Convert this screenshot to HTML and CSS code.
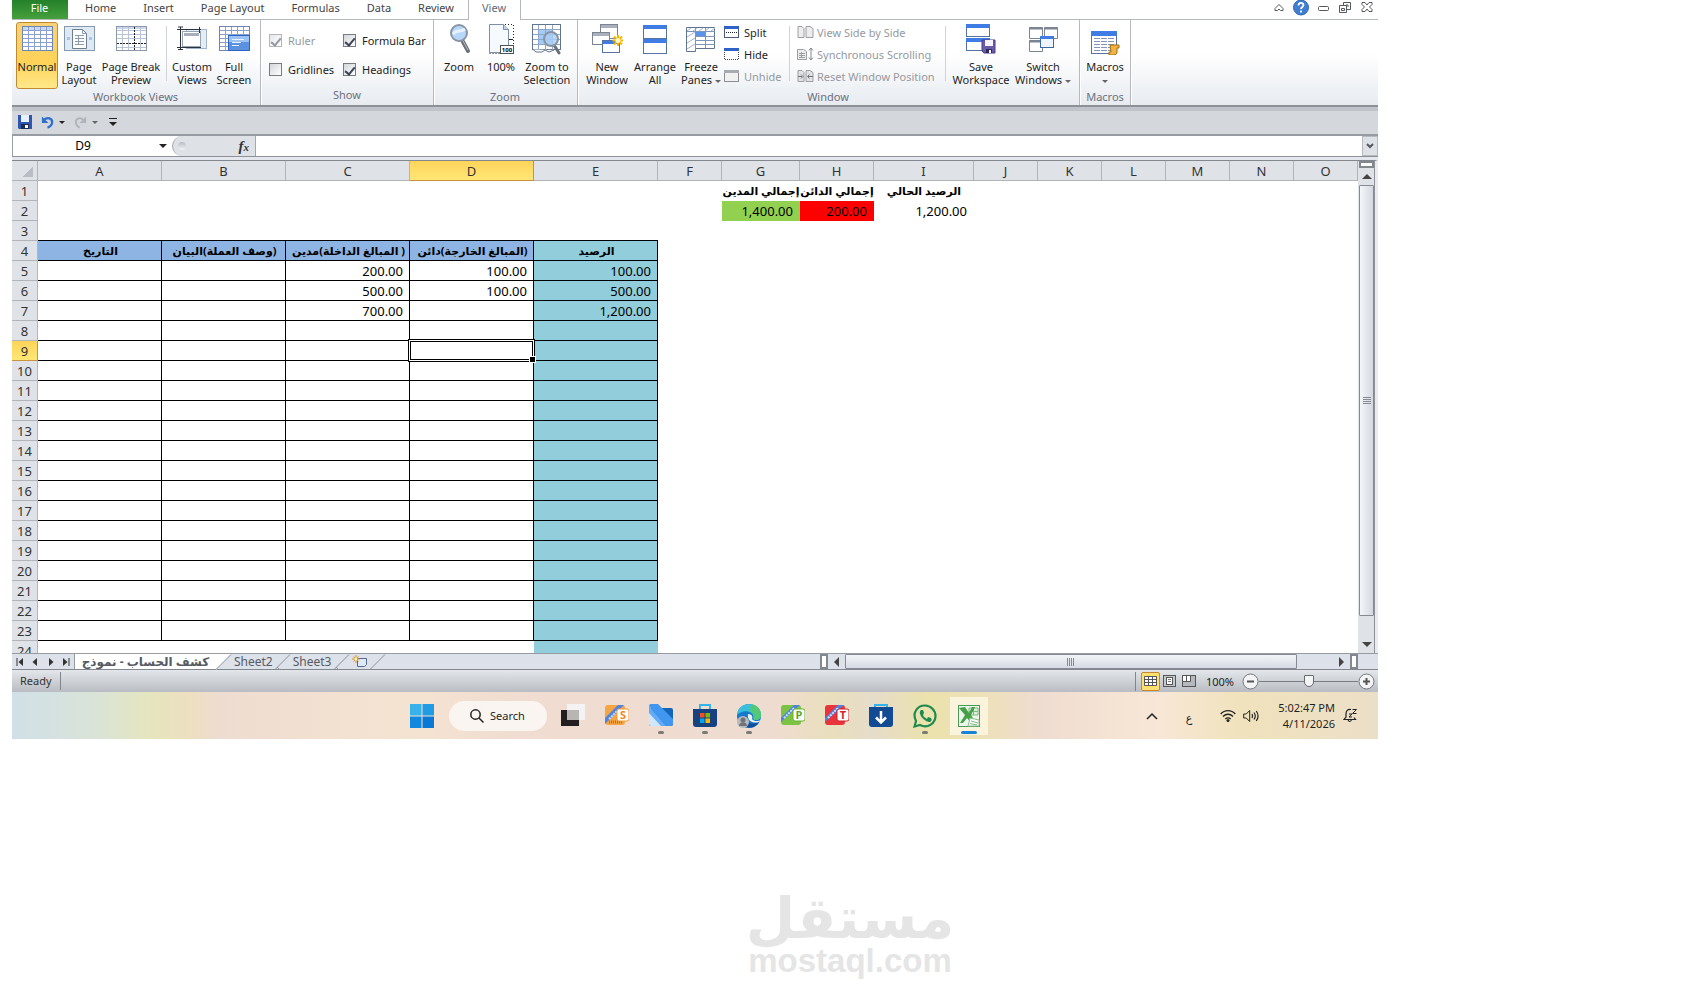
FILE: index.html
```html
<!DOCTYPE html>
<html lang="en">
<head>
    <meta charset="UTF-8">
    <meta name="viewport" content="width=device-width, initial-scale=1.0">
    <title>Account Statement</title>
    <link rel="stylesheet" href="styles.css">
</head>
<body>
    <main class="desktop">
        <header class="tabs">
            <button class="tab file">File</button>
            <button class="tab">Home</button>
            <button class="tab">Insert</button>
            <button class="tab">Page Layout</button>
            <button class="tab">Formulas</button>
            <button class="tab">Data</button>
            <button class="tab">Review</button>
            <button class="tab active">View</button>
            <div class="window-buttons">
                <button aria-label="Minimize ribbon"><svg width="16" height="16" viewBox="0 0 16 16"><path d="M4 8.500 8 4.500l4 4v2H9.500L8 9l-1.500 1.500H4z" fill="#fff" stroke="#55585e"/></svg></button>
                <button aria-label="Help"><svg width="16" height="16" viewBox="0 0 16 16"><circle cx="8" cy="7.500" r="7.500" fill="#3f7fd0" stroke="#2f66b5"/><path d="M5.500 5.500c0-3.400 5-3.200 5-.4C10.500 7 8 7 8 9M8 10.500v2" fill="none" stroke="#fff" stroke-width="1.800"/></svg></button>
                <button aria-label="Minimize"><svg width="16" height="16" viewBox="0 0 16 16"><rect x="3.500" y="6.500" width="10" height="4" rx="1" fill="#fff" stroke="#55585e"/></svg></button>
                <button aria-label="Restore"><svg width="16" height="16" viewBox="0 0 16 16"><path d="M6.500 2.500h7v7h-7z" fill="#fff" stroke="#55585e"/><path d="M9 5h2v2" fill="none" stroke="#55585e"/><path d="M2.500 5.500h7v7h-7z" fill="#fff" stroke="#55585e"/><path d="M4.500 8.500h3v2h-3z" fill="none" stroke="#55585e"/></svg></button>
                <button aria-label="Close"><svg width="16" height="16" viewBox="0 0 16 16"><path d="M3 2.500h3l2 2.500 2-2.500h3v2L10.500 7l2.500 2.500v2h-3L8 9l-2 2.500H3v-2L5.500 7 3 4.500z" fill="#fff" stroke="#55585e"/></svg></button>
            </div>
        </header>

        <section class="ribbon">
            <div class="group">
                <div class="group-body">
                    <button class="big sm pressed">
                        <svg width="32" height="32" viewBox="0 0 32 32"><rect x="1.500" y="3.500" width="30" height="24" fill="#fff" stroke="#6d87b0"/><rect x="2" y="4" width="29" height="3" fill="#c9d8ef"/><path d="M2 7.500h29M2 11.500h29M2 15.500h29M2 19.500h29M2 23.500h29M7.500 4v23M13.500 4v23M19.500 4v23M25.500 4v23" stroke="#8aa2cb"/></svg>
                        <span>Normal</span>
                    </button>
                    <button class="big sm">
                        <svg width="32" height="32" viewBox="0 0 32 32"><rect x="1.500" y="3.500" width="30" height="24" fill="#dfe9f3" stroke="#8399ad"/><path d="M9.500 6.500h10l4 4v15h-14z" fill="#fff" stroke="#6c7f92"/><path d="M19.500 6.500v4h4M12 12.500h9M12 15.500h9M12 18.500h9M12 21.500h9M15.500 12v10" fill="none" stroke="#8a9bb0"/><path d="M4 15.500h3M26 15.500h3" stroke="#a9c6e8" stroke-width="3"/></svg>
                        <span>Page<br>Layout</span>
                    </button>
                    <button class="big lg">
                        <svg width="32" height="32" viewBox="0 0 32 32"><rect x="1.500" y="3.500" width="30" height="24" fill="#fff" stroke="#8d99aa"/><rect x="2" y="4" width="29" height="2" fill="#c9d8ef"/><path d="M2 7.500h29M2 11.500h29M2 15.500h29M2 24.500h29M7.500 4v23M13.500 4v23M25.500 4v23" stroke="#b9c3d3"/><path d="M19.500 4v23M2 20.500h29" stroke="#222" stroke-dasharray="2 1"/></svg>
                        <span>Page Break<br>Preview</span>
                    </button>
                    <div class="sep"></div>
                    <button class="big sm">
                        <svg width="32" height="32" viewBox="0 0 32 32"><rect x="10.500" y="6.500" width="20" height="19" fill="#e3edf6" stroke="#9fb4c8"/><rect x="6.500" y="8.500" width="18" height="15" fill="#fff" stroke="#98a3b0"/><rect x="8" y="10" width="15" height="3" fill="#a8afb8"/><path d="M4.500 4v23M1 6.500h24M1 24.500h24M23.500 4v6M2 4h5M2 26.500h5" stroke="#2c3442" fill="none"/></svg>
                        <span>Custom<br>Views</span>
                    </button>
                    <button class="big sm">
                        <svg width="32" height="32" viewBox="0 0 32 32"><rect x="1.500" y="3.500" width="30" height="24" fill="#fff" stroke="#6d87b0"/><path d="M2 7.500h29M2 11.500h29M2 15.500h29M2 19.500h29M2 23.500h29M7.500 4v23M13.500 4v23M19.500 4v23M25.500 4v23" stroke="#8aa2cb"/><rect x="10.500" y="12.500" width="21" height="15" fill="#5a92e0" stroke="#2d64c0"/><rect x="11" y="13" width="20" height="6" fill="#9cc3f5"/><path d="M14 16.500h12M14 19.500h9M14 22.500h7" stroke="#e9f2ff"/></svg>
                        <span>Full<br>Screen</span>
                    </button>
                </div>
                <div class="group-name">Workbook Views</div>
            </div>

            <div class="group show">
                <div class="checks">
                    <label class="disabled"><input type="checkbox" checked disabled>Ruler</label>
                    <label><input type="checkbox" checked>Formula Bar</label>
                    <label><input type="checkbox">Gridlines</label>
                    <label><input type="checkbox" checked>Headings</label>
                </div>
                <div class="group-name">Show</div>
            </div>

            <div class="group">
                <div class="group-body">
                    <button class="big sm">
                        <svg width="32" height="32" viewBox="0 0 32 32"><path d="M19 17 25 28" stroke="#6b6f78" stroke-width="4" stroke-linecap="round"/><path d="M20 18 25 27" stroke="#b9bdc6"/><circle cx="16" cy="10" r="8" fill="#b7d7f8" stroke="#8a94a3" stroke-width="2"/><path d="M10 11c4-5 7-1 12-5" stroke="#e6f3ff" stroke-width="3" fill="none"/></svg>
                        <span>Zoom</span>
                    </button>
                    <button class="big sm">
                        <svg width="32" height="32" viewBox="0 0 32 32"><path d="M4.500 1.500h14l5 5v23h-19z" fill="#f6f9fd" stroke="#7b8fa9"/><path d="M18.500 1.500v5h5" fill="#c5d6ea" stroke="#7b8fa9"/><path d="M20 1.500h8.500v20M4.500 30.500h12" stroke="#222" stroke-dasharray="1 2" fill="none"/><path d="M24 16.500h4" stroke="#222"/><rect x="15.500" y="22.500" width="13" height="8" fill="#fff" stroke="#4c525c"/><text x="22" y="29" class="tiny">100</text></svg>
                        <span>100%</span>
                    </button>
                    <button class="big md">
                        <svg width="32" height="32" viewBox="0 0 32 32"><rect x="1.500" y="1.500" width="28" height="25" fill="#fff" stroke="#61748f"/><rect x="8" y="7" width="14" height="14" fill="#a4ccf7"/><path d="M2 6.500h27M2 11.500h27M2 16.500h27M2 21.500h27M7.500 2v25M14.500 2v25M21.500 2v25" stroke="#8ea6c6"/><path d="M2 26.500 5 29h6l3-2 4 2 5-2" fill="#fff" stroke="#61748f"/><path d="M23 22l5 8" stroke="#6b6f78" stroke-width="3" stroke-linecap="round"/><circle cx="20" cy="16" r="7" fill="#a9cef6" fill-opacity=".8" stroke="#8a94a3" stroke-width="2"/></svg>
                        <span>Zoom to<br>Selection</span>
                    </button>
                </div>
                <div class="group-name">Zoom</div>
            </div>

            <div class="group">
                <div class="group-body">
                    <button class="big md">
                        <svg width="32" height="32" viewBox="0 0 32 32"><rect x="9.500" y="1.500" width="17" height="14" fill="#fff" stroke="#7b8493"/><rect x="10" y="2" width="16" height="3" fill="#aab1bd"/><rect x="1.500" y="9.500" width="17" height="12" fill="#fff" stroke="#7b8493"/><rect x="2" y="10" width="16" height="3" fill="#aab1bd"/><rect x="11.500" y="17.500" width="17" height="12" fill="#fff" stroke="#5672a0"/><rect x="12" y="18" width="16" height="3" fill="#3f7ce4"/><path d="M27 12v11M21.500 17.500h11M23 13.500l8 8M31 13.500l-8 8" stroke="#f4b400" stroke-width="2"/><circle cx="27" cy="17.500" r="2.500" fill="#fff8c0"/></svg>
                        <span>New<br>Window</span>
                    </button>
                    <button class="big mid">
                        <svg width="32" height="32" viewBox="0 0 32 32"><rect x="4.500" y="2.500" width="23" height="28" fill="#fff" stroke="#5672a0"/><rect x="4" y="2" width="24" height="4" fill="#3f7ce4"/><rect x="4" y="16" width="24" height="4" fill="#3f7ce4"/><path d="M4 15.500h24" stroke="#5672a0"/></svg>
                        <span>Arrange<br>All</span>
                    </button>
                    <button class="big mid">
                        <svg width="32" height="32" viewBox="0 0 32 32"><path d="M1.500 4.500h28v21h-19v3h-9z" fill="#fff" stroke="#61748f"/><rect x="10" y="9" width="11" height="4" fill="#5b93ea"/><path d="M2 8.500h28M10 13.500h20M10 17.500h20M10 21.500h20M10.500 5v22M20.500 5v20" stroke="#7e95b8"/><path d="M2 8l4-3M8 8l4-3M14 8l4-3M20 8l4-3M26 8l4-3M2 14l8-5M2 20l8-5M2 26l8-5" stroke="#9cb4d6"/></svg>
                        <span>Freeze<br>Panes <i class="caret"></i></span>
                    </button>
                    <div class="small-list">
                        <button class="small"><svg width="16" height="14" viewBox="0 0 16 14"><rect x=".5" y="1.500" width="14" height="11" fill="#fff" stroke="#4b5a78"/><rect x="0" y="1" width="15" height="3" fill="#2e62c9"/><path d="M2 7.500h12" stroke="#222" stroke-dasharray="1 1"/></svg>Split</button>
                        <button class="small"><svg width="16" height="14" viewBox="0 0 16 14"><path d="M.5 3v9.500h14V3" fill="#fff" stroke="#444" stroke-dasharray="1 1"/><rect x="0" y="1" width="15" height="3" fill="#2e62c9"/></svg>Hide</button>
                        <button class="small disabled"><svg width="16" height="14" viewBox="0 0 16 14"><rect x=".5" y="1.500" width="14" height="11" fill="#f1f1f2" stroke="#8b8e94"/><rect x="0" y="1" width="15" height="3" fill="#a8abb0"/></svg>Unhide</button>
                    </div>
                    <div class="sep"></div>
                    <div class="small-list wide">
                        <button class="small disabled"><svg width="17" height="14" viewBox="0 0 17 14"><path d="M1 1.500h4l2 2v9H1zM9 1.500h4l3 2v9H9z" fill="#ededee" stroke="#9b9ea3"/></svg>View Side by Side</button>
                        <button class="small disabled"><svg width="17" height="14" viewBox="0 0 17 14"><path d="M.5 2.500h6l3 2v8h-9z" fill="#ededee" stroke="#9b9ea3"/><path d="M2 6.500h6M2 8.500h6M2 10.500h6M4.500 5v6" stroke="#9b9ea3"/><path d="M14 1v12M12 3.500 14 1l2 2.500M12 10.500l2 2.500 2-2.500" fill="none" stroke="#85888e"/></svg>Synchronous Scrolling</button>
                        <button class="small disabled"><svg width="17" height="14" viewBox="0 0 17 14"><path d="M1 1.500h4l2 2v9H1zM9 1.500h4l3 2v9H9z" fill="#e2e2e3" stroke="#9b9ea3"/><path d="M1 7.500h4M4 5.500l2 2-2 2M16 7.500h-5M12.500 5.500l-2 2 2 2" fill="none" stroke="#6f7278"/></svg>Reset Window Position</button>
                    </div>
                    <div class="sep"></div>
                    <button class="big lg">
                        <svg width="32" height="32" viewBox="0 0 32 32"><rect x="1.500" y="1.500" width="23" height="12" fill="#fff" stroke="#5672a0"/><rect x="1" y="1" width="24" height="4" fill="#3f7ce4"/><rect x="1.500" y="15.500" width="23" height="12" fill="#fff" stroke="#5672a0"/><rect x="1" y="15" width="24" height="4" fill="#3f7ce4"/><path d="M17 17h13v13H19l-2-2z" fill="#6a5aa8" stroke="#4a3c86"/><rect x="20" y="17" width="8" height="6" fill="#f4f4fa"/><rect x="21" y="26" width="6" height="4" fill="#2e2858"/><rect x="24" y="27" width="2" height="3" fill="#fff"/></svg>
                        <span>Save<br>Workspace</span>
                    </button>
                    <button class="big lg">
                        <svg width="32" height="32" viewBox="0 0 32 32"><g fill="#fff" stroke="#7b8493"><path d="M2.500 4.500h13v11h-13zM17.500 4.500h13v11h-13zM2.500 17.500h13v11h-13z"/></g><path d="M2 5.500h14M17 5.500h14M2 18.500h14" stroke="#7b8493" stroke-width="2"/><rect x="13.500" y="13.500" width="13" height="11" fill="#eef5ff" stroke="#3c69ae"/><rect x="13" y="13" width="14" height="3" fill="#3f7ce4"/></svg>
                        <span>Switch<br>Windows <i class="caret"></i></span>
                    </button>
                </div>
                <div class="group-name">Window</div>
            </div>

            <div class="group flush">
                <div class="group-body">
                    <button class="big md">
                        <svg width="32" height="32" viewBox="0 0 32 32"><rect x="2.500" y="8.500" width="25" height="22" fill="#fff" stroke="#5672a0"/><rect x="2" y="8" width="26" height="5" fill="#3f7ce4"/><path d="M5 15.500h20M5 18.500h20M5 21.500h20M5 24.500h20M5 27.500h20" stroke="#8496b8" stroke-dasharray="6 1"/><path d="M21 22h9v3h-2v5l-2 2h-6v-3h2z" fill="#f0b441" stroke="#a96c14"/></svg>
                        <span>Macros<br><i class="caret"></i></span>
                    </button>
                </div>
                <div class="group-name">Macros</div>
            </div>
        </section>

        <nav class="quick">
            <button aria-label="Save" class="save"><svg width="14" height="14" viewBox="0 0 14 14"><path d="M0 0h14v14H1l-1-1z" fill="#2e56b0"/><rect x="3" y="0" width="8" height="7" fill="#e8f0fb"/><rect x="3" y="9" width="8" height="5" fill="#1c2c55"/><rect x="7" y="10" width="3" height="3" fill="#fff"/></svg></button>
            <button aria-label="Undo"><svg width="13" height="14" viewBox="0 0 14 14"><path d="M3 5c4-4 9-2 9 2 0 3-2 5-5 6" fill="none" stroke="#2f6fd0" stroke-width="2.500"/><path d="M1 1v7h7z" fill="#2f6fd0"/></svg></button>
            <i class="caret dark"></i>
            <button aria-label="Redo"><svg width="13" height="14" viewBox="0 0 14 14"><path d="M10 5C7 1 2 3 2 7c0 3 2 5 4 6" fill="none" stroke="#b0b4ba" stroke-width="2"/><path d="M13 1v7H6z" fill="#b0b4ba"/></svg></button>
            <i class="caret"></i>
            <button aria-label="Customize" class="more"><svg width="8" height="8" viewBox="0 0 8 8"><path d="M0 .5h8" stroke="#222"/><path d="M0 4h8L4 8z" fill="#222"/></svg></button>
        </nav>

        <div class="formula">
            <input class="name-box" aria-label="Name box" value="D9">
            <button class="name-drop" aria-label="Names"><i class="caret dark"></i></button>
            <div class="fx"><span class="knob"></span><button class="fx-btn" aria-label="Insert function"><em>f</em><em class="x">x</em></button></div>
            <input class="formula-box" aria-label="Formula">
            <button class="expand" aria-label="Expand"><svg width="8" height="6" viewBox="0 0 8 6"><path d="M1 1l3 3 3-3" fill="none" stroke="#55585e" stroke-width="2"/></svg></button>
        </div>

        <div class="sheet-area">
            <div class="sheet">
                <table class="grid">
                    <colgroup>
                        <col class="c-head"><col class="c-wide" span="5"><col class="c-std"><col class="c-g"><col class="c-h"><col class="c-i"><col class="c-std" span="6">
                    </colgroup>
                    <thead><tr id="letters"></tr></thead>
                    <tbody id="rows"></tbody>
                </table>
            </div>
            <div class="vscroll">
                <span class="split-box"></span>
                <button class="arrow" aria-label="Scroll up"><i class="up"></i></button>
                <div class="vthumb"><span class="grip"></span></div>
                <button class="arrow" aria-label="Scroll down"><i class="down"></i></button>
            </div>
        </div>

        <div class="bottom">
            <div class="sheet-nav">
                <button aria-label="First sheet"><svg width="8" height="8" viewBox="0 0 8 8"><path d="M1 0v8" stroke="#333" stroke-width="1"/><path d="M7 0v8L2.500 4z" fill="#333"/></svg></button>
                <button aria-label="Previous sheet"><svg width="8" height="8" viewBox="0 0 8 8"><path d="M6 0v8L1.500 4z" fill="#333"/></svg></button>
                <button aria-label="Next sheet"><svg width="8" height="8" viewBox="0 0 8 8"><path d="M2 0v8L6.500 4z" fill="#333"/></svg></button>
                <button aria-label="Last sheet"><svg width="8" height="8" viewBox="0 0 8 8"><path d="M1 0v8L5.500 4z" fill="#333"/><path d="M7 0v8" stroke="#333" stroke-width="1"/></svg></button>
            </div>
            <button class="sheet-tab current" dir="rtl">كشف الحساب - نموذج</button>
            <svg class="slant" width="16" height="16" viewBox="0 0 16 16"><path d="M0 0h15L0 16z" fill="#fff"/><path d="M0 15.500 15 .5" stroke="#8b9097"/></svg>
            <button class="sheet-tab">Sheet2</button>
            <svg class="slant" width="16" height="16" viewBox="0 0 16 16"><path d="M0 15.500 15 .5M2 13l3 3" stroke="#8b9097"/></svg>
            <button class="sheet-tab">Sheet3</button>
            <svg class="slant" width="16" height="16" viewBox="0 0 16 16"><path d="M0 15.500 15 .5M2 13l3 3" stroke="#8b9097"/></svg>
            <button class="sheet-tab new" aria-label="Insert sheet"><svg width="16" height="13" viewBox="0 0 16 13"><path d="M5.500 3.500h9v6l-2 2h-7z" fill="#dfeaf8" stroke="#55698f"/><path d="M4 0v8M0 4h8M1.500 1.500l5 5M6.500 1.500l-5 5" stroke="#d9902a"/><circle cx="4" cy="4" r="1.500" fill="#fff3b0"/></svg></button>
            <svg class="slant" width="16" height="16" viewBox="0 0 16 16"><path d="M0 15.500 15 .5" stroke="#8b9097"/></svg>
            <div class="hscroll">
                <span class="hsplit"></span>
                <button class="harrow" aria-label="Scroll left"><i class="left"></i></button>
                <div class="hthumb"><span class="grip side"></span></div>
                <button class="harrow end" aria-label="Scroll right"><i class="right"></i></button>
                <span class="hsplit"></span>
            </div>
        </div>

        <div class="status">
            <span class="ready">Ready</span>
            <div class="status-right">
                <button class="view on" aria-label="Normal view"><svg width="14" height="12" viewBox="0 0 14 12"><path d="M.5 1.500h12v9H.5zM.5 4.500h12M.5 7.500h12M4.500 1.500v9M8.500 1.500v9" fill="#fff" stroke="#555"/></svg></button>
                <button class="view" aria-label="Page layout view"><svg width="14" height="12" viewBox="0 0 14 12"><rect x=".5" y=".5" width="12" height="11" fill="#c5c8cc" stroke="#555"/><rect x="3.500" y="2.500" width="6" height="7" fill="#fff" stroke="#555"/><path d="M5 4.500h3M5 6.500h3" stroke="#777"/></svg></button>
                <button class="view" aria-label="Page break view"><svg width="14" height="12" viewBox="0 0 14 12"><rect x=".5" y=".5" width="13" height="11" fill="#b5b8bc" stroke="#555"/><path d="M.5.5h4v6h-4zM4.500.5h4v6h-4z" fill="#fff" stroke="#555"/></svg></button>
                <span class="percent">100%</span>
                <button class="round" aria-label="Zoom out"><svg width="17" height="17" viewBox="0 0 17 17"><circle cx="8.500" cy="8.500" r="7.500" fill="#f2f4f6" stroke="#74787e"/><path d="M5 8.500h7" stroke="#555" stroke-width="2"/></svg></button>
                <input type="range" class="zoom" aria-label="Zoom level" min="0" max="100" value="50">
                <button class="round" aria-label="Zoom in"><svg width="17" height="17" viewBox="0 0 17 17"><circle cx="8.500" cy="8.500" r="7.500" fill="#f2f4f6" stroke="#74787e"/><path d="M5 8.500h7M8.500 5v7" stroke="#555" stroke-width="2"/></svg></button>
            </div>
        </div>

        <footer class="taskbar">
            <div class="apps">
                <button class="app" aria-label="Start"><svg width="24" height="24" viewBox="0 0 24 24"><path d="M0 0h11.500v11.500H0z" fill="#35b3ea"/><path d="M12.500 0H24v11.500H12.500z" fill="#1f9ce4"/><path d="M0 12.500h11.500V24H0z" fill="#1088dd"/><path d="M12.500 12.500H24V24H12.500z" fill="#0a78d4"/></svg></button>
                <button class="search"><svg width="14" height="14" viewBox="0 0 14 14"><circle cx="5.500" cy="5.500" r="4.700" fill="none" stroke="#222" stroke-width="1.500"/><path d="M9 9l4.500 4.500" stroke="#222" stroke-width="1.500"/></svg>Search</button>
                <button class="app" aria-label="Task view"><svg width="24" height="24" viewBox="0 0 24 24"><rect x="0" y="6" width="18" height="16" fill="#231f20"/><rect x="6" y="0" width="18" height="16" fill="#f3f3f3"/><rect x="6" y="6" width="12" height="10" fill="#b9b5b2"/></svg></button>
                <button class="app" aria-label="Sheets app"><svg width="24" height="24" viewBox="0 0 24 24"><rect y="1" width="20" height="20" rx="3" fill="#f6a545"/><path d="M0 14 13 1h6L0 20z" fill="#4e83e0"/><path d="M4 15 14 5" stroke="#cfe0ff" stroke-width="2" stroke-dasharray="2 1"/><path d="M4 18h14" stroke="#e25a2a" stroke-dasharray="1 1" stroke-width="3"/><rect x="12" y="5" width="12" height="12" rx="2" fill="#fff" stroke="#f39a3c"/><text x="18" y="15" class="badge orange">S</text></svg></button>
                <button class="app run" aria-label="Files"><svg width="24" height="24" viewBox="0 0 24 24"><rect y="4" width="24" height="18" rx="2" fill="#1565b8"/><path d="M0 2q0-2 2-2h7l15 15v5q0 2-2 2h-5z" fill="#4196f0"/><path d="M0 2v9l11 11h6z" fill="#62abf7"/><path d="M0 9l12 13H2q-2 0-2-2z" fill="#cfe6fd"/></svg></button>
                <button class="app run" aria-label="Store"><svg width="24" height="24" viewBox="0 0 24 24"><path d="M7 5V1h10v4" fill="none" stroke="#35b3ea" stroke-width="2"/><path d="M0 5h24v15q0 3-3 3H3q-3 0-3-3z" fill="#17417f"/><path d="M7 9h4.500v4.500H7z" fill="#f25022"/><path d="M12.500 9H17v4.500h-4.500z" fill="#7fba00"/><path d="M7 14.500h4.500V19H7z" fill="#00a4ef"/><path d="M12.500 14.500H17V19h-4.500z" fill="#ffb900"/></svg></button>
                <button class="app run" aria-label="Edge"><svg width="24" height="24" viewBox="0 0 24 24"><circle cx="12" cy="12" r="12" fill="#1679ce"/><path d="M0 11C1-3 23-4 24 11c0 5-5 6-8 4 3-6-8-12-16-4z" fill="#39bfdc"/><path d="M14 0c8 2 10 6 10 11 0 5-5 6-8 4 2-4-1-6-3-8z" fill="#52c878"/><path d="M9 12c-1 8 7 9 13 6-3 6-10 7-15 4-3-4-2-9 2-10z" fill="#104e9c"/><path d="M11 10c4 0 5 3 4 5 2 3 7 2 9 1l-2 2c-6 2-12-1-11-8z" fill="#eef3f0"/><circle cx="6" cy="18" r="6" fill="#b7b9bc"/><circle cx="6" cy="16" r="2.500" fill="#6f7276"/><path d="M2 22c0-5 8-5 8 0z" fill="#6f7276"/></svg></button>
                <button class="app" aria-label="Presentation app"><svg width="24" height="24" viewBox="0 0 24 24"><rect y="1" width="20" height="20" rx="3" fill="#7cc243"/><path d="M0 14 13 1h6L0 18z" fill="#4e83e0"/><path d="M3 14 13 4" stroke="#cfe0ff" stroke-width="2" stroke-dasharray="2 1"/><rect x="12" y="5" width="12" height="12" rx="2" fill="#fff" stroke="#6ab12f"/><text x="18" y="15" class="badge lime">P</text></svg></button>
                <button class="app" aria-label="Text app"><svg width="24" height="24" viewBox="0 0 24 24"><rect y="1" width="20" height="20" rx="3" fill="#e8343a"/><path d="M0 14 13 1h6L0 18z" fill="#4e83e0"/><path d="M3 14 13 4" stroke="#cfe0ff" stroke-width="2" stroke-dasharray="2 1"/><rect x="12" y="5" width="12" height="12" rx="2" fill="#fff" stroke="#d0202a"/><text x="18" y="15" class="badge crimson">T</text></svg></button>
                <button class="app" aria-label="Downloads"><svg width="24" height="24" viewBox="0 0 24 24"><path d="M6 3V1h12v2" fill="none" stroke="#35b3ea" stroke-width="2"/><path d="M0 3h24v17q0 3-3 3H3q-3 0-3-3z" fill="#124a94"/><path d="M12 7v11M7 13.500l5 5 5-5" fill="none" stroke="#fff" stroke-width="2.500"/></svg></button>
                <button class="app run" aria-label="WhatsApp"><svg width="24" height="24" viewBox="0 0 24 24"><path d="M1.500 22.500 3 17C-1 9 4 1.500 12 1.500c6 0 10.500 5 10.500 10.500C22.500 19 15 25 7 21z" fill="none" stroke="#1f8a4d" stroke-width="2.200"/><path d="M8 6c-4 3 3 12 9 12 2-1 2-3 1-4l-3-1-1 2c-2-1-4-3-4-4l1-2-1-3z" fill="#1f8a4d"/></svg></button>
                <button class="app on" aria-label="Excel"><svg width="24" height="24" viewBox="0 0 24 24"><rect x="1.500" y="1.500" width="21" height="21" fill="#eef6ec" stroke="#4c9a57"/><path d="M12 4h9v7h-9zM12 7.500h9M16.500 4v7" fill="#dff0dc" stroke="#7db782"/><path d="M2 4l6-1 4 6 3-6h3l-4 8 5 8h-5l-4-5-4 5H3l5-8z" fill="#46a046"/><path d="M11 22l2-8 9 2v6z" fill="#fff" stroke="#8abf8e"/><path d="M14 17l7 2M13 19.500l7 1.500" stroke="#7db782"/></svg></button>
            </div>
            <div class="tray">
                <button aria-label="Hidden icons"><svg width="12" height="12" viewBox="0 0 12 12"><path d="M1 9l5-5 5 5" fill="none" stroke="#222" stroke-width="1.500"/></svg></button>
                <button class="lang" lang="ar">ع</button>
                <button class="net" aria-label="Network"><svg width="16" height="14" viewBox="0 0 16 14"><path d="M.7 5c4-4.500 10.600-4.500 14.600 0M3 7.500c3-3 7-3 10 0M5.300 10c1.500-1.500 3.900-1.500 5.400 0" fill="none" stroke="#222" stroke-width="1.300"/><circle cx="8" cy="11.500" r="1.500" fill="#222"/></svg><svg width="17" height="14" viewBox="0 0 17 14"><path d="M.7 5h2.500l3.500-3.500v11L3.200 9H.7z" fill="none" stroke="#222"/><path d="M9 5q1 2 0 4M11 3.500q2.500 3.500 0 7M13.300 2q3.500 5 0 10" fill="none" stroke="#222" stroke-width="1.200"/></svg></button>
                <div class="clock">5:02:47 PM<br>4/11/2026</div>
                <button class="bell" aria-label="Notifications"><svg width="15" height="15" viewBox="0 0 15 15"><path d="M8 1.500C4.500 1 3 3 3 6v3l-2 2.500h11.500L11 9.500M5 12q1.500 3 3.500 0" fill="none" stroke="#222" stroke-width="1.200"/><path d="M9.500 1.500h4L9.500 5.500h4M6 6h3L6 9h3" fill="none" stroke="#222"/></svg></button>
            </div>
        </footer>
    </main>

    <div class="brand">
        <div class="brand-ar" lang="ar" dir="rtl">مستقل</div>
        <div class="brand-en">mostaql.com</div>
    </div>

    <script src="script.js"></script>
</body>
</html>
```
FILE: styles.css
```css
* {
    box-sizing: border-box;
    margin: 0;
    padding: 0;
}
body {
    background: #fff;
    color: #1e1e1e;
    font-family: "Noto Sans", "DejaVu Sans", sans-serif;
    font-size: 11px;
    line-height: 13px;
}
button {
    border: none;
    background: none;
    color: inherit;
    font: inherit;
}
svg {
    display: block;
    flex: none;
}
.desktop {
    display: flex;
    flex-direction: column;
    height: calc(74vh - 1px);
    margin: 0 322px 0 12px;
}

/* ribbon tabs */
.tabs {
    display: flex;
    flex: none;
    height: 20px;
    border-bottom: 1px solid #b4b7bb;
}
.tab {
    height: 19px;
    padding: 0 14px 5px 13px;
    color: #444;
}
.tab.file {
    width: 56px;
    margin-right: 4px;
    background: linear-gradient(#24802a, #46a03c);
    color: #fff;
}
.tab.active {
    height: 20px;
    border: 1px solid #b4b7bb;
    border-width: 0 1px;
    padding-bottom: 6px;
    background: #fff;
    color: #666b75;
}
.window-buttons {
    display: flex;
    gap: 6px;
    margin-left: auto;
    padding-right: 3px;
}
.window-buttons button {
    height: 16px;
}

/* ribbon */
.ribbon {
    display: flex;
    flex: none;
    height: 87px;
    border-bottom: 2px solid #8d9299;
    background: linear-gradient(#fff 40%, #e7ebf0);
}
.group {
    display: flex;
    flex-direction: column;
    padding: 2px 5px 0 4px;
    border-right: 1px solid #b6b9be;
    box-shadow: 1px 0 #fff;
}
.group.flush {
    padding: 2px 0 0;
}
.group-body {
    display: flex;
    flex: 1;
}
.group-name {
    flex: none;
    height: 18px;
    padding-top: 1px;
    color: #6a7180;
    text-align: center;
}
.big {
    display: flex;
    flex-direction: column;
    align-items: center;
    justify-content: flex-start;
    gap: 5px;
    height: 67px;
    padding: 1px 0 0;
    white-space: nowrap;
}
.sm { width: 42px; }
.mid { width: 46px; }
.md { width: 50px; }
.lg { width: 62px; }
.pressed {
    border: 1px solid #c28a30;
    border-radius: 3px;
    padding-top: 0;
    background: linear-gradient(#fcd278, #ffd257 60%, #ffe88a);
}
.sep {
    width: 1px;
    margin: 4px 4px 8px;
    background: #d0d3d8;
}
.caret {
    display: inline-block;
    border: 3px solid transparent;
    border-top-color: #666;
    border-bottom: none;
    vertical-align: middle;
}
.caret.dark {
    border-width: 3px 3px 0;
    border-top-color: #222;
}
.group.show {
    width: 173px;
    padding-left: 5px;
}
.checks {
    display: grid;
    flex: 1;
    grid-template-columns: 74px 1fr;
    grid-auto-rows: 29px;
    padding: 4px 0 0 3px;
}
.checks label {
    display: flex;
    align-items: center;
    gap: 6px;
    height: 29px;
    white-space: nowrap;
}
.checks input {
    appearance: none;
    display: grid;
    place-items: center;
    width: 13px;
    height: 13px;
    border: 1px solid #777b82;
    background: linear-gradient(135deg, #d2d5da, #fff);
}
.checks input:checked::after {
    content: "";
    width: 4px;
    height: 8px;
    border: solid #3d4556;
    border-width: 0 2px 2px 0;
    transform: rotate(40deg);
}
.disabled {
    color: #96999f;
}
.checks .disabled input {
    opacity: .55;
}
.small-list {
    display: flex;
    flex-direction: column;
    width: 61px;
}
.small-list.wide {
    width: 147px;
    padding-left: 3px;
}
.small {
    display: flex;
    align-items: center;
    gap: 4px;
    height: 22px;
    padding-bottom: 2px;
    white-space: nowrap;
}
.wide .small {
    gap: 3px;
}

/* quick access bar */
.quick {
    display: flex;
    flex: none;
    align-items: center;
    height: 29px;
    border-top: 4px solid #bfc4cb;
    border-bottom: 2px solid #979ca4;
    padding: 0 0 1px 6px;
    background: #d4d7dc;
}
.quick button {
    margin-right: 5px;
}
.quick .save {
    margin-right: 9px;
}
.quick .caret {
    margin-right: 9px;
}
.quick .more {
    margin-left: 2px;
}

/* formula bar */
.formula {
    display: flex;
    flex: none;
    height: 21px;
    border-bottom: 1px solid #8d9299;
    border-left: 1px solid #9da1a8;
    background: #fff;
}
.formula input {
    border: none;
    outline: none;
    background: #fff;
    color: #000;
    font: 12px/20px "Noto Sans", sans-serif;
}
.name-box {
    width: 140px;
    text-align: center;
}
.name-drop {
    width: 19px;
}
.name-drop .caret {
    display: block;
    width: 8px;
    margin-left: 6px;
    border-width: 4px 4px 0;
}
.fx {
    display: flex;
    align-items: center;
    justify-content: space-between;
    width: 84px;
    border: 1px solid #a3a7ae;
    border-width: 0 1px 0 1px;
    border-radius: 10px 0 0 10px;
    padding: 0 6px 0 5px;
    background: #dee1e6;
}
.knob {
    width: 8px;
    height: 8px;
    border-radius: 50%;
    background: linear-gradient(#b9bdc4, #f2f3f5);
}
.fx-btn {
    color: #333;
    font: bold 15px/18px "Liberation Serif", serif;
}
.fx-btn .x {
    font-size: 11px;
}
.formula-box {
    flex: 1;
    min-width: 0;
}
.expand {
    display: grid;
    place-items: center;
    width: 16px;
    border: 1px solid #b6bac0;
    background: #dee1e6;
}

/* sheet */
.sheet-area {
    display: flex;
    flex: 1;
    min-height: 0;
    border-top: 3px solid #e4e8ee;
}
.sheet {
    flex: 1;
    min-width: 0;
    overflow: hidden;
    border-top: 1px solid #83878e;
}
.grid {
    width: 1346px;
    border-spacing: 0;
    table-layout: fixed;
    font-size: 13px;
    line-height: 17px;
}
.c-head { width: 26px; }
.c-wide { width: 124px; }
.c-std { width: 64px; }
.c-g { width: 78px; }
.c-h { width: 74px; }
.c-i { width: 100px; }
.grid th {
    height: 20px;
    border: solid #b1b5ba;
    border-width: 0 1px 1px 0;
    padding-top: 2px;
    background: #dfe2e7;
    color: #333;
    font-weight: normal;
}
.grid th.picked {
    border-color: #c9923e;
    background: linear-gradient(#ffd45a, #ffe775);
}
.grid td {
    position: relative;
    height: 20px;
    padding: 2px 7px 0 0;
    color: #000;
    text-align: right;
    vertical-align: top;
    white-space: nowrap;
}
.grid .corner {
    background: linear-gradient(135deg, transparent 50%, #b9bdc3 50%) no-repeat 10px 5px / 11px 11px #dfe2e7;
}
.grid .box {
    border: solid #000;
    border-width: 0 1px 1px 0;
    padding-right: 6px;
}
.grid .line {
    border-bottom: 1px solid #000;
}
.grid .title {
    padding: 1px 0 0;
    font-size: 11px;
    font-weight: bold;
    text-align: center;
}
.grid .blue { background: #8db4e2; }
.grid .teal { background: #92cddc; }
.grid .green { background: #92d050; }
.grid .red { background: #f00; }
.cursor::after {
    content: "";
    position: absolute;
    z-index: 1;
    inset: 0;
    border: 1px solid #000;
    box-shadow: 0 0 0 1px #fff, 0 0 0 2px #000;
}
.cursor::before {
    content: "";
    position: absolute;
    z-index: 2;
    right: -3px;
    bottom: -3px;
    width: 5px;
    height: 5px;
    border: 1px solid #fff;
    background: #000;
}

/* scrollbars */
.vscroll {
    display: flex;
    flex: none;
    flex-direction: column;
    width: 20px;
    border-top: 1px solid #83878e;
    border-right: 3px solid #e9ebef;
    background: #dfe2e7;
    box-shadow: inset -1px 0 #8d9299;
}
.split-box {
    height: 7px;
    margin: 0 1px;
    border: 2px solid #83878e;
    background: #fff;
}
.arrow {
    display: grid;
    place-items: center;
    height: 17px;
}
.vthumb {
    display: grid;
    flex: 1;
    place-items: center;
    width: 15px;
    margin: 0 0 20px 1px;
    border: 1px solid #868b93;
    border-radius: 1px;
    background: linear-gradient(90deg, #f4f6f9, #d3d8e0);
}
.grip {
    width: 8px;
    height: 8px;
    background: repeating-linear-gradient(#868b93 0 1px, transparent 1px 2px);
}
.grip.side {
    background: repeating-linear-gradient(90deg, #868b93 0 1px, transparent 1px 2px);
}
.up, .down, .left, .right {
    border: 5px solid transparent;
}
.up { border-top: none; border-bottom-color: #444; }
.down { border-bottom: none; border-top-color: #444; }
.left { border-left: none; border-right-color: #444; }
.right { border-right: none; border-left-color: #444; }

/* sheet tabs */
.bottom {
    display: flex;
    flex: none;
    height: 17px;
    border-top: 1px solid #979ca4;
    border-bottom: 1px solid #83878e;
    background: #dde1e9;
}
.sheet-nav {
    display: flex;
    align-items: center;
    justify-content: space-around;
    width: 63px;
    border-right: 1px solid #979ca4;
}
.sheet-tab {
    padding: 0 2px;
    overflow: hidden;
    color: #565b64;
    font-size: 12px;
    line-height: 15px;
}
.sheet-tab.current {
    width: 141px;
    padding: 0;
    background: #fff;
    font-weight: bold;
    white-space: nowrap;
}
.hscroll {
    display: flex;
    width: 558px;
    margin-left: auto;
    padding-right: 20px;
}
.hsplit {
    width: 8px;
    border: 2px solid #83878e;
    background: #fff;
}
.harrow {
    display: grid;
    place-items: center;
    width: 17px;
}
.hthumb {
    display: grid;
    flex: 1;
    place-items: center;
    border: 1px solid #868b93;
    border-radius: 1px;
    background: linear-gradient(#f2f4f7, #d6dbe3);
}
.harrow.end {
    margin-left: 36px;
}

/* status bar */
.status {
    display: flex;
    flex: none;
    align-items: center;
    justify-content: space-between;
    height: 22px;
    background: linear-gradient(#e3e6ea, #b9bdc3);
}
.ready {
    width: 49px;
    border-right: 1px solid #82868c;
    padding-left: 8px;
    color: #333;
    line-height: 18px;
}
.status-right {
    display: flex;
    align-items: center;
    padding: 0 3px 0 5px;
    border-left: 1px solid #82868c;
}
.view {
    display: grid;
    place-items: center;
    width: 19px;
    height: 19px;
}
.view.on {
    border: 1px solid #c28a30;
    border-radius: 2px;
    background: #ffdf70;
}
.percent {
    width: 44px;
    text-align: center;
}
.zoom {
    appearance: none;
    width: 99px;
    height: 14px;
    background: linear-gradient(#777b82, #777b82) no-repeat center / 100% 1px;
}
.zoom::-webkit-slider-thumb {
    appearance: none;
    width: 10px;
    height: 12px;
    border: 1px solid #666a70;
    border-radius: 1px 1px 5px 5px;
    background: #f3f4f6;
}

/* taskbar */
.taskbar {
    display: grid;
    flex: none;
    grid-template-columns: 1fr auto 1fr;
    align-items: center;
    height: 47px;
    background: linear-gradient(90deg, #d1e0e8, #d9e3d8 6%, #e5e5bf 10%, #eddfc0 13%, #eedcd0 15%, #f5e3d2 29%, #f0dcd0 38%, #efdcd0 56%, #e9dfbc 60%, #e6dccb 63%, #ebe2ac 67%, #ede1b8 71%, #efdcd0 75%, #f8e7d6 84%, #f0e2bc 90%, #ecdfc8);
}
.apps {
    display: flex;
    grid-column: 2;
}
.app {
    display: grid;
    position: relative;
    place-items: center;
    width: 44px;
    height: 47px;
}
.app.run::after,
.app.on::after {
    content: "";
    position: absolute;
    bottom: 5px;
    left: 19px;
    width: 6px;
    height: 3px;
    border-radius: 2px;
    background: #7b7a76;
}
.app.on {
    background: linear-gradient(#fbf4dc, #fbf4dc) no-repeat center / 38px 38px;
}
.app.on::after {
    left: 14px;
    width: 16px;
    background: #1683d8;
}
.search {
    display: flex;
    align-items: center;
    align-self: center;
    justify-content: center;
    gap: 6px;
    width: 98px;
    height: 30px;
    margin: 0 4px 0 5px;
    border-radius: 15px;
    background: #fbf5f1;
}
.tray {
    display: flex;
    align-items: center;
    justify-content: flex-end;
    padding-right: 20px;
}
.lang {
    width: 62px;
    padding-top: 4px;
}
.net {
    display: flex;
    gap: 7px;
}
.clock {
    margin: 0 8px 0 18px;
    line-height: 16px;
    text-align: right;
}
.badge {
    font: bold 11px "Noto Sans", sans-serif;
    text-anchor: middle;
}
.orange { fill: #ee8a20; }
.lime { fill: #5ea82a; }
.crimson { fill: #d8252c; }
.tiny {
    font: bold 6px "Noto Sans", sans-serif;
    text-anchor: middle;
}

/* site mark under the window */
.brand {
    padding-top: 154px;
    color: #e5e5e6;
    text-align: center;
}
.brand-ar {
    font: bold 57px/50px "DejaVu Sans", sans-serif;
}
.brand-en {
    font: bold 33px/36px "Liberation Sans", sans-serif;
}
```
FILE: script.js
```js
const letters = "ABCDEFGHIJKLMNO".split("");
const selected = { col: "D", row: 9 };

const cells = {
    G1: "إجمالي المدين", H1: "إجمالي الدائن", I1: "الرصيد الحالي",
    G2: "1,400.00", H2: "200.00", I2: "1,200.00",
    A4: "التاريخ", B4: "(وصف العملة)البيان", C4: "( المبالغ الداخلة)مدين",
    D4: "(المبالغ الخارجة)دائن", E4: "الرصيد",
    C5: "200.00", D5: "100.00", E5: "100.00",
    C6: "500.00", D6: "100.00", E6: "500.00",
    C7: "700.00", E7: "1,200.00"
};

function cellClass(col, row) {
    const list = [];
    const inTable = "ABCDE".includes(col);
    if (inTable && row === 3) list.push("line");
    if (inTable && row >= 4 && row <= 23) list.push("box");
    if (row === 4 && "ABCD".includes(col)) list.push("blue");
    if (row >= 4 && col === "E") list.push("teal");
    if (row === 1 || row === 4) list.push("title");
    if (row === 2 && col === "G") list.push("green");
    if (row === 2 && col === "H") list.push("red");
    if (col === selected.col && row === selected.row) list.push("cursor");
    return list.join(" ");
}

function addCell(tr, tag, text, className) {
    const cell = document.createElement(tag);
    cell.textContent = text;
    if (className) cell.className = className;
    tr.appendChild(cell);
    return cell;
}

const head = document.getElementById("letters");
addCell(head, "th", "", "corner");
letters.forEach(col => addCell(head, "th", col, col === selected.col ? "picked" : ""));

const body = document.getElementById("rows");
for (let row = 1; row <= 24; row++) {
    const tr = document.createElement("tr");
    addCell(tr, "th", row, row === selected.row ? "picked" : "");
    letters.forEach(col => {
        const td = addCell(tr, "td", cells[col + row] || "", cellClass(col, row));
        if (td.classList.contains("title")) td.dir = "rtl";
    });
    body.appendChild(tr);
}
```
